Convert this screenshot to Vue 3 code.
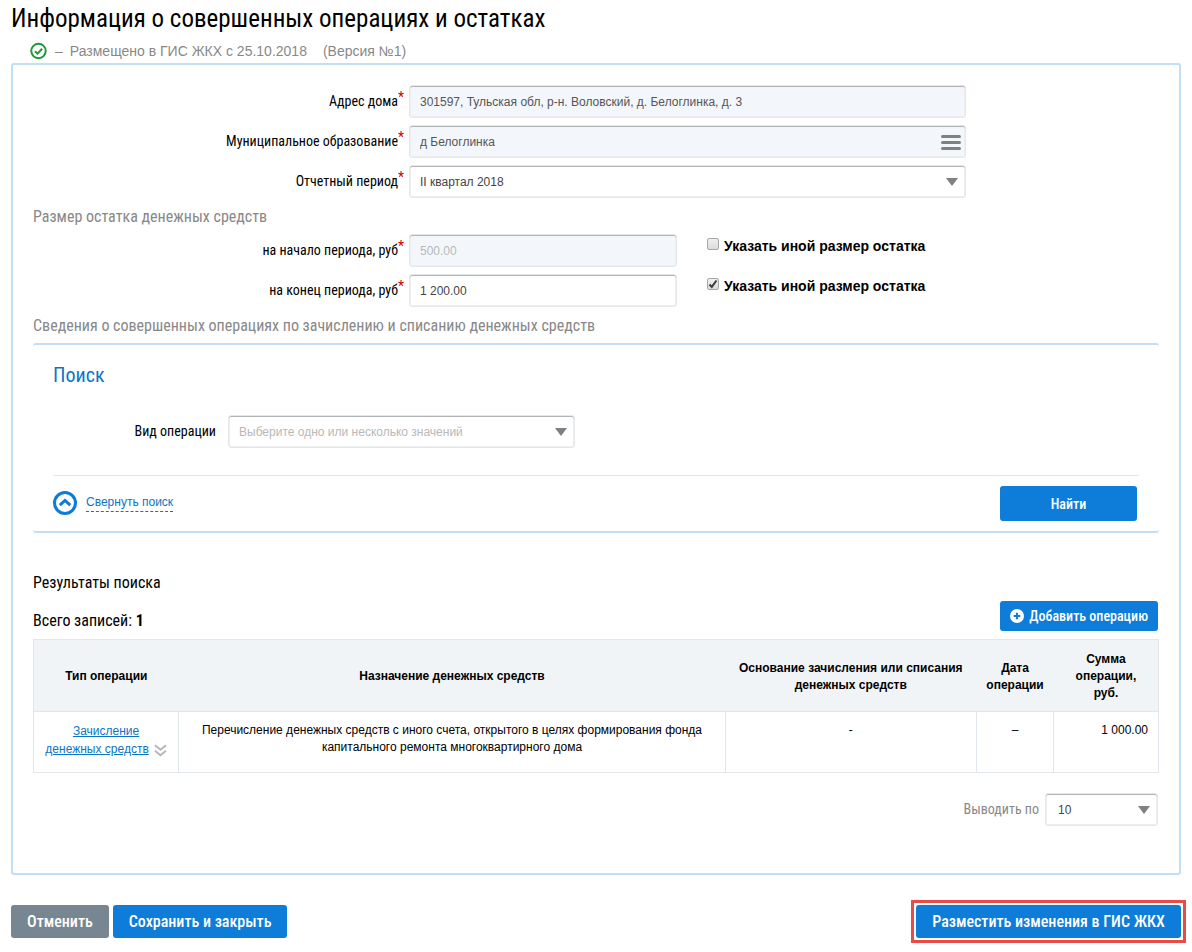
<script setup>
import { ref } from 'vue'

const address = ref('301597, Тульская обл, р-н. Воловский, д. Белоглинка, д. 3')
const municipality = ref('д Белоглинка')
const period = ref('II квартал 2018')
const startSum = ref('500.00')
const endSum = ref('1 200.00')
const customStart = ref(false)
const customEnd = ref(true)
const kind = ref('')
const pageSize = ref('10')

const rows = ref([
  {
    type: 'Зачисление денежных средств',
    purpose:
      'Перечисление денежных средств с иного счета, открытого в целях формирования фонда капитального ремонта многоквартирного дома',
    basis: '-',
    date: '–',
    sum: '1 000.00',
  },
])
</script>

<template>
  <main class="page">
    <h1>Информация о совершенных операциях и остатках</h1>
    <p class="status">
      <svg class="ok" viewBox="0 0 18 18" aria-hidden="true">
        <circle cx="9" cy="9" r="7.2" />
        <path d="M5.4 9.2l2.7 2.5 4.5-4.9" />
      </svg>
      <span>–</span>
      <span>Размещено в ГИС ЖКХ с 25.10.2018</span>
      <span class="version">(Версия №1)</span>
    </p>

    <section class="frame">
      <div class="row">
        <label class="label" for="address">Адрес дома<sup>*</sup></label>
        <input id="address" v-model="address" class="field locked" readonly />
      </div>
      <div class="row">
        <label class="label" for="municipality">Муниципальное образование<sup>*</sup></label>
        <div class="holder">
          <input id="municipality" v-model="municipality" class="field locked" readonly />
          <button type="button" class="burger" aria-label="Выбрать">
            <svg viewBox="0 0 20 16" aria-hidden="true">
              <path d="M1.5 1.5h17M1.5 7.5h17M1.5 13.5h17" />
            </svg>
          </button>
        </div>
      </div>
      <div class="row">
        <label class="label" for="period">Отчетный период<sup>*</sup></label>
        <div class="holder">
          <select id="period" v-model="period" class="field">
            <option>II квартал 2018</option>
          </select>
          <svg class="arrow" viewBox="0 0 12 8" aria-hidden="true"><path d="M0 0h12L6 8z" /></svg>
        </div>
      </div>

      <h2>Размер остатка денежных средств</h2>

      <div class="row sums">
        <label class="label" for="start">на начало периода, руб<sup>*</sup></label>
        <input id="start" v-model="startSum" class="field locked" disabled />
        <label class="check">
          <span class="box">
            <input v-model="customStart" type="checkbox" />
            <svg v-if="customStart" viewBox="0 0 12 12" aria-hidden="true"><path d="M2.5 6.5l2.3 2.4 4.7-6.4" /></svg>
          </span>
          <span>Указать иной размер остатка</span>
        </label>
      </div>
      <div class="row sums">
        <label class="label" for="end">на конец периода, руб<sup>*</sup></label>
        <input id="end" v-model="endSum" class="field" />
        <label class="check">
          <span class="box">
            <input v-model="customEnd" type="checkbox" />
            <svg v-if="customEnd" viewBox="0 0 12 12" aria-hidden="true"><path d="M2.5 6.5l2.3 2.4 4.7-6.4" /></svg>
          </span>
          <span>Указать иной размер остатка</span>
        </label>
      </div>

      <h2>Сведения о совершенных операциях по зачислению и списанию денежных средств</h2>

      <section class="search">
        <h3>Поиск</h3>
        <div class="kind">
          <label class="label" for="kind">Вид операции</label>
          <div class="holder">
            <select id="kind" v-model="kind" class="field empty">
              <option value="">Выберите одно или несколько значений</option>
            </select>
            <svg class="arrow" viewBox="0 0 12 8" aria-hidden="true"><path d="M0 0h12L6 8z" /></svg>
          </div>
        </div>
        <div class="actions">
          <a href="#" class="collapse">
            <svg viewBox="0 0 24 24" aria-hidden="true">
              <circle cx="12" cy="12" r="10.5" />
              <path d="M6.8 14.2l5.2-4.7 5.2 4.7" />
            </svg>
            <span>Свернуть поиск</span>
          </a>
          <button type="button" class="btn find">Найти</button>
        </div>
      </section>

      <p class="results">Результаты поиска</p>
      <div class="total">
        <p>Всего записей: <b>1</b></p>
        <button type="button" class="btn add">
          <svg viewBox="0 0 14 14" aria-hidden="true">
            <circle cx="7" cy="7" r="7" />
            <path d="M7 3.7v6.6M3.7 7h6.6" />
          </svg>
          Добавить операцию
        </button>
      </div>

      <table>
        <colgroup>
          <col class="c-type" />
          <col class="c-purpose" />
          <col class="c-basis" />
          <col class="c-date" />
          <col class="c-sum" />
        </colgroup>
        <thead>
          <tr>
            <th>Тип операции</th>
            <th>Назначение денежных средств</th>
            <th>Основание зачисления или списания денежных средств</th>
            <th>Дата операции</th>
            <th>Сумма операции, руб.</th>
          </tr>
        </thead>
        <tbody>
          <tr v-for="r in rows" :key="r.type">
            <td class="type">
              <a href="#">{{ r.type }}</a><button type="button" class="more" aria-label="Подробнее">
                <svg viewBox="0 0 13 13" aria-hidden="true"><path d="M1 1.2l5.5 4.6L12 1.2M1 6.7l5.5 4.6L12 6.7" /></svg>
              </button>
            </td>
            <td class="purpose">{{ r.purpose }}</td>
            <td>{{ r.basis }}</td>
            <td>{{ r.date }}</td>
            <td class="sum">{{ r.sum }}</td>
          </tr>
        </tbody>
      </table>

      <div class="pager">
        <label for="size">Выводить по</label>
        <div class="holder">
          <select id="size" v-model="pageSize" class="field">
            <option>10</option>
          </select>
          <svg class="arrow" viewBox="0 0 12 8" aria-hidden="true"><path d="M0 0h12L6 8z" /></svg>
        </div>
      </div>
    </section>

    <footer>
      <button type="button" class="btn big grey">Отменить</button>
      <button type="button" class="btn big">Сохранить и закрыть</button>
      <div class="marked">
        <button type="button" class="btn big">Разместить изменения в ГИС ЖКХ</button>
      </div>
    </footer>
  </main>
</template>

<style>
body {
  margin: 0;
  background: #fff;
}
</style>

<style scoped>
* {
  box-sizing: border-box;
}
.page {
  --narrow: "Roboto Condensed", "Liberation Sans Narrow", Roboto, sans-serif;
  padding: 4px 11px 0;
  font: 12px/17px "Liberation Sans", Arial, sans-serif;
  color: #000;
}
h1, h2, h3, p {
  margin: 0;
  font-weight: 400;
}
h1, h2, h3, .label, .btn, .results, .total p, .pager label {
  font-family: var(--narrow);
}
h1 {
  font-size: 25px;
  line-height: 29px;
}
.status {
  display: flex;
  align-items: center;
  gap: 7px;
  padding: 9px 0 3px 18px;
  color: #888;
  font-size: 14px;
  line-height: 18px;
}
.ok {
  width: 19px;
  height: 18px;
  fill: none;
  stroke: #1c9a3a;
  stroke-width: 2;
}
.version {
  margin-left: 9px;
}
.frame {
  padding: 20px 20px 47px;
  border: 2px solid #c1dff7;
  border-radius: 3px;
}
.row {
  display: grid;
  grid-template-columns: 371fr 557fr 188fr;
  column-gap: 5px;
  align-items: center;
  margin-bottom: 7px;
}
.sums {
  grid-template-columns: 371fr 268fr 477fr;
}
.label {
  text-align: right;
  font-size: 14px;
  line-height: 18px;
}
.row .label {
  padding-bottom: 1px;
}
sup {
  color: #c00;
  font-size: 14px;
  line-height: 0;
  vertical-align: 4px;
}
.holder {
  position: relative;
}
.field {
  display: block;
  width: 100%;
  height: 33px;
  margin: 0;
  padding: 0 9px 0 10px;
  border: 1px solid #e4e8eb;
  border-radius: 3px;
  background: #fff;
  box-shadow: inset 0 1px 0 #b2b5b8, inset 0 0 0 1px #eceef0;
  appearance: none;
  color: #444;
  font: 12px/16px "Liberation Sans", Arial, sans-serif;
}
.locked {
  background: #f3f7fc;
  color: #555;
}
.locked:disabled,
.empty {
  color: #b8b8b8;
}
.arrow {
  position: absolute;
  top: 13px;
  right: 8px;
  width: 12px;
  height: 8px;
  fill: #808080;
  pointer-events: none;
}
.burger {
  position: absolute;
  top: 10px;
  right: 5px;
  width: 20px;
  height: 16px;
  padding: 0;
  border: 0;
  background: none;
}
.burger svg {
  display: block;
  stroke: #808080;
  stroke-width: 3;
  stroke-linecap: round;
}
.check {
  display: flex;
  align-self: start;
  gap: 5px;
  margin-left: 25px;
  padding-top: 4px;
  font-size: 14px;
  font-weight: 700;
  line-height: 16px;
}
.box {
  position: relative;
  width: 12px;
  height: 12px;
}
.box input {
  display: block;
  width: 12px;
  height: 12px;
  margin: 0;
  border: 1px solid #a8a8a8;
  border-radius: 2px;
  background: linear-gradient(#eee, #dcdcdc);
  appearance: none;
}
.box svg {
  position: absolute;
  inset: 0;
  fill: none;
  stroke: #3c3c3c;
  stroke-width: 2;
  pointer-events: none;
}
h2 {
  padding: 2px 0 8px;
  color: #888;
  font-size: 16px;
  line-height: 19px;
}
.search {
  padding: 19px 20px 10px;
  border: solid #c1dff7;
  border-width: 2px 0;
  border-radius: 3px;
}
h3 {
  color: #0c74c4;
  font-size: 20px;
  line-height: 22px;
}
.kind {
  display: grid;
  grid-template-columns: 163fr 347fr 552fr;
  column-gap: 12px;
  align-items: center;
  padding: 29px 0 27px;
}
.kind .label {
  padding-bottom: 1px;
}
.actions {
  display: flex;
  justify-content: space-between;
  align-items: center;
  padding: 10px 2px 0 0;
  border-top: 1px solid #e1e5e9;
}
.collapse {
  display: flex;
  align-items: center;
  gap: 9px;
  padding-bottom: 2px;
  color: #0c74c4;
  text-decoration: none;
}
.collapse svg {
  width: 24px;
  height: 24px;
  fill: none;
  stroke: #0d7bd8;
  stroke-width: 3;
}
.collapse span {
  border-bottom: 1px dashed #0c74c4;
}
.btn {
  height: 34px;
  padding: 0 17px;
  border: 0;
  border-radius: 3px;
  background: #0d7dd9;
  color: #fff;
  font-size: 14px;
  font-weight: 500;
}
.find {
  width: 137px;
  height: 35px;
}
.results {
  padding-top: 40px;
  font-size: 16px;
  line-height: 19px;
}
.total {
  display: flex;
  justify-content: space-between;
  align-items: center;
  padding: 9px 1px 8px 0;
}
.total p {
  padding-top: 8px;
  font-size: 16px;
  line-height: 19px;
}
.add {
  display: flex;
  align-items: center;
  gap: 5px;
  height: 30px;
  padding: 0 10px;
}
.add svg {
  width: 14px;
  height: 14px;
  fill: #fff;
  stroke: none;
}
.add path {
  stroke: #0d7dd9;
  stroke-width: 2;
}
table {
  width: 100%;
  border-collapse: collapse;
  table-layout: fixed;
}
.c-type { width: 12.9%; }
.c-purpose { width: 48.6%; }
.c-basis { width: 22.3%; }
.c-date { width: 6.9%; }
.c-sum { width: 9.3%; }
th {
  height: 72px;
  padding: 2px 9px 0;
  background: #f0f4f7;
  font-weight: 700;
}
thead {
  border: 1px solid #e1e7ec;
}
td {
  height: 61px;
  padding: 10px 10px 0;
  border: 1px solid #e1e7ec;
  text-align: center;
  vertical-align: top;
}
.purpose {
  padding: 10px 20px 0;
}
.sum {
  text-align: right;
}
.type {
  line-height: 18px;
}
.type a {
  color: #0c74c4;
}
.more {
  width: 13px;
  height: 13px;
  margin-left: 5px;
  padding: 0;
  border: 0;
  background: none;
  vertical-align: -4px;
}
.more svg {
  display: block;
  fill: none;
  stroke: #b4b8bb;
  stroke-width: 2;
}
.pager {
  display: flex;
  justify-content: flex-end;
  align-items: center;
  gap: 6px;
  padding: 20px 1px 0 0;
}
.pager label {
  color: #888;
  font-size: 14px;
}
.pager .holder {
  width: 113px;
}
.pager .field {
  padding-left: 12px;
}
footer {
  display: flex;
  align-items: center;
  gap: 4px;
  margin-top: 25px;
}
.big {
  height: 33px;
  padding: 0 16px;
  font-size: 16px;
}
.grey {
  background: #788691;
}
.marked {
  margin: 0 -5px 0 auto;
  padding: 2px;
  border: 3px solid #e94b48;
}
.marked .btn {
  display: block;
}
</style>
